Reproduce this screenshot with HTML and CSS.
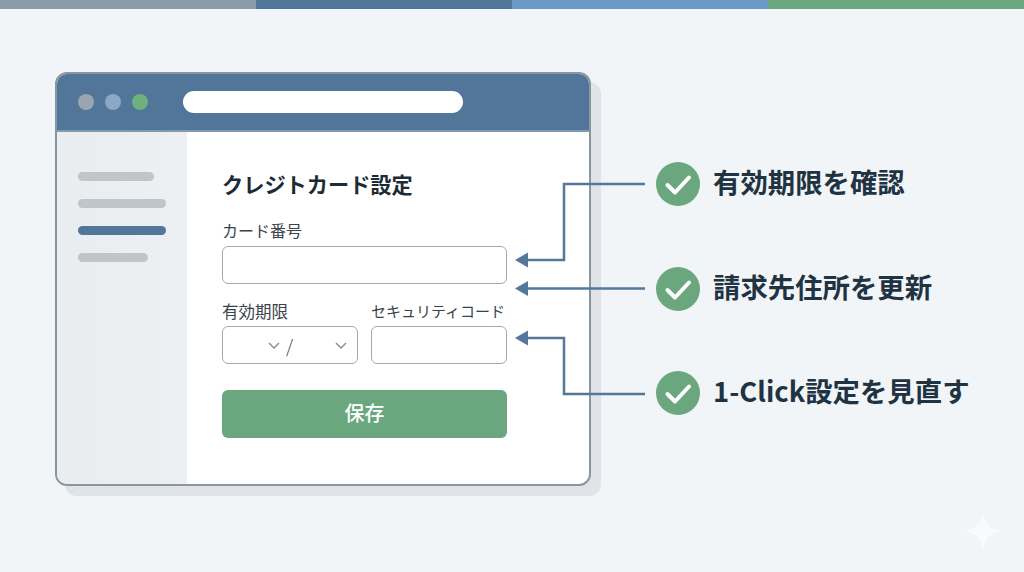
FILE: index.html
```html
<!DOCTYPE html>
<html lang="ja">
<head>
    <meta charset="UTF-8">
    <meta name="viewport" content="width=device-width, initial-scale=1.0">
    <title>クレジットカード設定</title>
    <link rel="stylesheet" href="styles.css">
</head>
<body>
    <!-- 上部のカラーバー -->
    <div class="stripes">
        <span class="stripe-gray"></span>
        <span class="stripe-navy"></span>
        <span class="stripe-blue"></span>
        <span class="stripe-green"></span>
    </div>

    <main class="stage">
        <!-- ブラウザウィンドウ -->
        <section class="window">
            <header class="titlebar">
                <span class="dot dot-gray"></span>
                <span class="dot dot-blue"></span>
                <span class="dot dot-green"></span>
                <span class="address"></span>
            </header>
            <div class="window-body">
                <nav class="sidebar">
                    <span class="nav-bar nav-short"></span>
                    <span class="nav-bar"></span>
                    <span class="nav-bar nav-active"></span>
                    <span class="nav-bar nav-small"></span>
                </nav>
                <form class="card-form">
                    <h1>クレジトカード設定</h1>
                    <label class="field-label">カード番号</label>
                    <input class="text-input" type="text">
                    <div class="field-row">
                        <div class="field-col">
                            <label class="field-label field-label-wide">有効期限</label>
                            <div class="expiry">
                                <svg class="chevron" viewBox="0 0 12 7"><path d="M1 1l5 5 5-5"/></svg>
                                <span class="slash">/</span>
                                <svg class="chevron" viewBox="0 0 12 7"><path d="M1 1l5 5 5-5"/></svg>
                            </div>
                        </div>
                        <div class="field-col">
                            <label class="field-label field-label-narrow">セキュリティコード</label>
                            <input class="text-input" type="text">
                        </div>
                    </div>
                    <button class="save" type="button"><span>保存</span></button>
                </form>
            </div>
        </section>

        <!-- チェック項目 -->
        <ul class="checks">
            <li>
                <svg class="check" viewBox="0 0 44 44"><circle cx="22" cy="22" r="22"/><path d="M11.500 23l7.500 7.500 14-15"/></svg>
                <span>有効期限を確認</span>
            </li>
            <li>
                <svg class="check" viewBox="0 0 44 44"><circle cx="22" cy="22" r="22"/><path d="M11.500 23l7.500 7.500 14-15"/></svg>
                <span>請求先住所を更新</span>
            </li>
            <li>
                <svg class="check" viewBox="0 0 44 44"><circle cx="22" cy="22" r="22"/><path d="M11.500 23l7.500 7.500 14-15"/></svg>
                <span>1-Click設定を見直す</span>
            </li>
        </ul>
    </main>

    <!-- 矢印はウィンドウの上に重なる -->
    <svg class="connectors" viewBox="0 0 1024 572">
        <path class="line" d="M645 184H564V260H526"/>
        <path class="head" d="M515 260l13-7.500v15z"/>
        <path class="line" d="M645 288.500H526"/>
        <path class="head" d="M515 288.500l13-7.500v15z"/>
        <path class="line" d="M645 394H564V338H526"/>
        <path class="head" d="M515 338l13-7.500v15z"/>
    </svg>

    <svg class="sparkle" viewBox="0 0 40 40"><path d="M20 0C21 12 28 19 40 20 28 21 21 28 20 40 19 28 12 21 0 20 12 19 19 12 20 0z"/></svg>
</body>
</html>
```

FILE: styles.css
```css
/* General */
* {
    box-sizing: border-box;
}

body {
    margin: 0;
    width: 1024px;
    height: 572px;
    position: relative;
    overflow: hidden;
    background: #f1f5f8;
    color: #1f3342;
    font-family: "Noto Sans CJK JP", "Noto Sans", sans-serif;
}

/* Top stripes */
.stripes {
    display: flex;
    height: 9px;
}

.stripes span {
    flex: 1;
}

.stripe-gray { background: #8a9bac; }
.stripe-navy { background: #52769a; }
.stripe-blue { background: #6a9ac4; }
.stripe-green { background: #6aa77e; }

.stage {
    display: flex;
    align-items: flex-start;
    padding: 63px 0 0 55px;
}

/* Window */
.window {
    width: 536px;
    height: 414px;
    display: flex;
    flex-direction: column;
    background: #fff;
    border: 2.500px solid #8b959f;
    border-radius: 12px;
    box-shadow: 10px 10px 0 #e0e4e9;
    overflow: hidden;
}

.titlebar {
    height: 58px;
    flex-shrink: 0;
    display: flex;
    align-items: center;
    padding: 0 0 1px 21px;
    background: #52769a;
    border-bottom: 2px solid #8399ad;
}

.dot {
    width: 16px;
    height: 16px;
    border-radius: 50%;
    margin-right: 11px;
}

.dot-gray { background: #9aa5af; }
.dot-blue { background: #8aa9c7; }
.dot-green { background: #6fb07f; }

.address {
    width: 280px;
    height: 22px;
    margin-left: 24px;
    border-radius: 11px;
    background: #fff;
}

.window-body {
    flex: 1;
    display: flex;
}

/* Sidebar */
.sidebar {
    width: 130px;
    display: flex;
    flex-direction: column;
    gap: 18px;
    padding: 40px 21px 0;
    background: linear-gradient(90deg, #eaedf0, #edf0f2);
}

.nav-bar {
    width: 88px;
    height: 9px;
    border-radius: 5px;
    background: #c0c5ca;
}

.nav-short { width: 76px; }
.nav-small { width: 70px; }
.nav-active { background: #52769a; }

/* Form */
.card-form {
    width: 320px;
    padding: 38px 0 0 35px;
}

.card-form h1 {
    margin: 0 0 22px;
    font-size: 21.200px;
    line-height: 28px;
    font-weight: 700;
    color: #1d2b36;
}

.field-label {
    display: block;
    margin-bottom: 6px;
    font-size: 16px;
    line-height: 20px;
    color: #39434c;
    white-space: nowrap;
}

.field-label-wide { font-size: 16.500px; }
.field-label-narrow { font-size: 15px; }

.text-input {
    display: block;
    width: 100%;
    height: 38px;
    padding: 0;
    background: #fff;
    border: 1.500px solid #a3abb2;
    border-radius: 6px;
}

.field-row {
    display: flex;
    gap: 13px;
    margin-top: 17px;
}

.field-col {
    width: 136px;
}

.field-col .field-label {
    margin-bottom: 5px;
}

.field-col .text-input {
    width: 136px;
}

.expiry {
    height: 38px;
    display: flex;
    align-items: center;
    padding-left: 45px;
    border: 1.500px solid #a3abb2;
    border-radius: 6px;
}

.chevron {
    width: 12px;
    height: 7px;
    fill: none;
    stroke: #8a929a;
    stroke-width: 1.500;
}

.slash {
    margin: 0 42px 0 6px;
    font-size: 18px;
    font-weight: 300;
    line-height: 20px;
    color: #39434c;
}

.save {
    display: block;
    width: 100%;
    height: 48px;
    margin-top: 26px;
    padding: 0 0 4px;
    border: 0;
    border-radius: 6px;
    background: #6aa77e;
    color: #fff;
    font-family: inherit;
    font-size: 20px;
    font-weight: 500;
}

/* Checks */
.checks {
    list-style: none;
    margin: 90px 0 0 65px;
    padding: 0;
    display: flex;
    flex-direction: column;
    gap: 60.500px;
}

.checks li {
    display: flex;
    align-items: center;
    gap: 13px;
    height: 44px;
    font-size: 27.400px;
    font-weight: 700;
    white-space: nowrap;
}

.checks li span {
    padding-bottom: 6px;
}

.check {
    width: 44px;
    height: 44px;
    flex-shrink: 0;
}

.check circle {
    fill: #6aa77e;
}

.check path {
    fill: none;
    stroke: #fff;
    stroke-width: 4;
    stroke-linecap: round;
    stroke-linejoin: round;
}

/* Overlays */
.connectors {
    position: absolute;
    top: 0;
    left: 0;
    width: 1024px;
    height: 572px;
    pointer-events: none;
}

.line {
    fill: none;
    stroke: #55789a;
    stroke-width: 2.500;
}

.head {
    fill: #55789a;
}

.sparkle {
    position: absolute;
    left: 963px;
    top: 511px;
    width: 40px;
    height: 40px;
    fill: #f8fafb;
}
```
